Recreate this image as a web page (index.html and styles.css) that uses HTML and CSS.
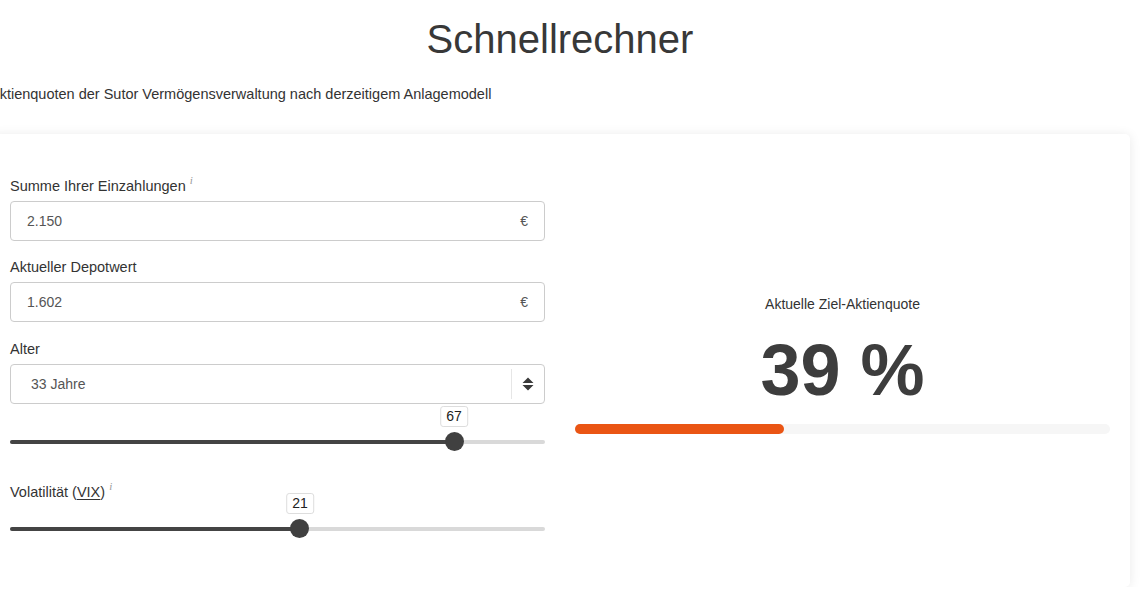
FILE: index.html
```html
<!DOCTYPE html>
<html>
<head>
    <title>Schnellrechner</title>
    <link rel="stylesheet" href="styles.css">
</head>
<body>
    <div class="page">
        <h1 class="title">Schnellrechner</h1>
        <p class="lead">Aktienquoten der Sutor Vermögensverwaltung nach derzeitigem Anlagemodell</p>

        <div class="card">
            <div class="form">
                <label class="field-label">Summe Ihrer Einzahlungen <sup class="info">i</sup></label>
                <div class="input">
                    <span class="value">2.150</span>
                    <span class="unit">€</span>
                </div>

                <label class="field-label">Aktueller Depotwert</label>
                <div class="input">
                    <span class="value">1.602</span>
                    <span class="unit">€</span>
                </div>

                <label class="field-label age-label">Alter</label>
                <div class="select">
                    <span class="value">33 Jahre</span>
                    <span class="select-arrows">
                        <svg width="12" height="14" viewBox="0 0 12 14">
                            <path d="M6 0.5 L11.5 6 L0.5 6 Z M6 13.5 L0.5 8 L11.5 8 Z" fill="#3a3a3a"/>
                        </svg>
                    </span>
                </div>

                <div class="slider slider-age">
                    <div class="track"></div>
                    <div class="fill" style="width: 83%"></div>
                    <div class="thumb" style="left: 83%"></div>
                    <div class="tip" style="left: 83%">67</div>
                </div>

                <label class="field-label vix-label">Volatilität (<abbr>VIX</abbr>) <sup class="info">i</sup></label>
                <div class="slider">
                    <div class="track"></div>
                    <div class="fill" style="width: 54.2%"></div>
                    <div class="thumb" style="left: 54.2%"></div>
                    <div class="tip" style="left: 54.2%">21</div>
                </div>
            </div>

            <div class="result">
                <div class="result-label">Aktuelle Ziel-Aktienquote</div>
                <div class="result-value">39 %</div>
                <div class="bar">
                    <div class="bar-fill" style="width: 39%"></div>
                </div>
            </div>
        </div>
    </div>
</body>
</html>
```

FILE: styles.css
```css
html, body { margin: 0; padding: 0; background-color: #fff; overflow: hidden; }
body { font-family: "Liberation Sans", Arial, sans-serif; color: #333; font-size: 14px; }
.page { width: 1140px; margin-left: -10px; }

.title { margin: 17px 0 0; font-size: 40px; line-height: 44px; font-weight: normal; text-align: center; color: #383838; }
.lead { margin: 23px 0 0; line-height: 20px; font-size: 14.5px; color: #333; }

.card {
    margin-top: 30px; background-color: #fff; border-radius: 5px;
    box-shadow: 0 1px 12px rgba(0,0,0,0.09);
    padding: 42px 20px 45px; display: grid; grid-template-columns: 535px 535px; column-gap: 30px;
}

.field-label { display: block; line-height: 20px; font-size: 14.5px; margin: 16px 0 5px; color: #333; }
.form > .field-label:first-child { margin-top: 0; }
.age-label { margin-top: 17px; }
.info { font-family: "Liberation Serif", serif; font-style: italic; font-size: 11px; color: #999; vertical-align: 7px; line-height: 0; }
abbr { text-decoration: underline; text-underline-offset: 2px; }

.input, .select {
    height: 40px; box-sizing: border-box; border: 1px solid #ccc; border-radius: 4px;
    display: flex; align-items: center; padding: 0 16px; color: #555;
}
.input .value { flex: 1; }
.input .unit { color: #555; }
.select { padding: 0 0 0 20px; }
.select .value { flex: 1; }
.select-arrows {
    width: 32px; height: 30px; border-left: 1px solid #e6e6e6;
    display: flex; align-items: center; justify-content: center;
}

.slider { position: relative; height: 40px; }
.slider-age { margin-top: 11px; }
.vix-label { margin-top: 27px; margin-bottom: 0; }
.slider .track { position: absolute; left: 0; right: 0; top: 25px; height: 4px; border-radius: 2px; background-color: #d9d9d9; }
.slider .fill { position: absolute; left: 0; top: 25px; height: 4px; border-radius: 2px; background-color: #444; }
.slider .thumb {
    position: absolute; top: 17px; width: 19px; height: 19px; margin-left: -9.5px;
    border-radius: 50%; background-color: #404040;
}
.slider .tip {
    position: absolute; top: -9px; transform: translateX(-50%);
    height: 21px; line-height: 19px; box-sizing: border-box; padding: 0 5px;
    border: 1px solid #ddd; border-radius: 3px; background-color: #fff; color: #222;
}

.result { display: flex; flex-direction: column; justify-content: center; align-items: stretch; padding-top: 9px; }
.result-label { text-align: center; line-height: 20px; color: #333; }
.result-value { text-align: center; font-size: 72px; line-height: 75px; font-weight: bold; color: #3d3d3d; margin-top: 19px; }
.bar { margin-top: 16px; height: 10px; border-radius: 5px; background-color: #f6f6f6; }
.bar-fill { height: 10px; border-radius: 5px; background-color: #ea5514; }
```
